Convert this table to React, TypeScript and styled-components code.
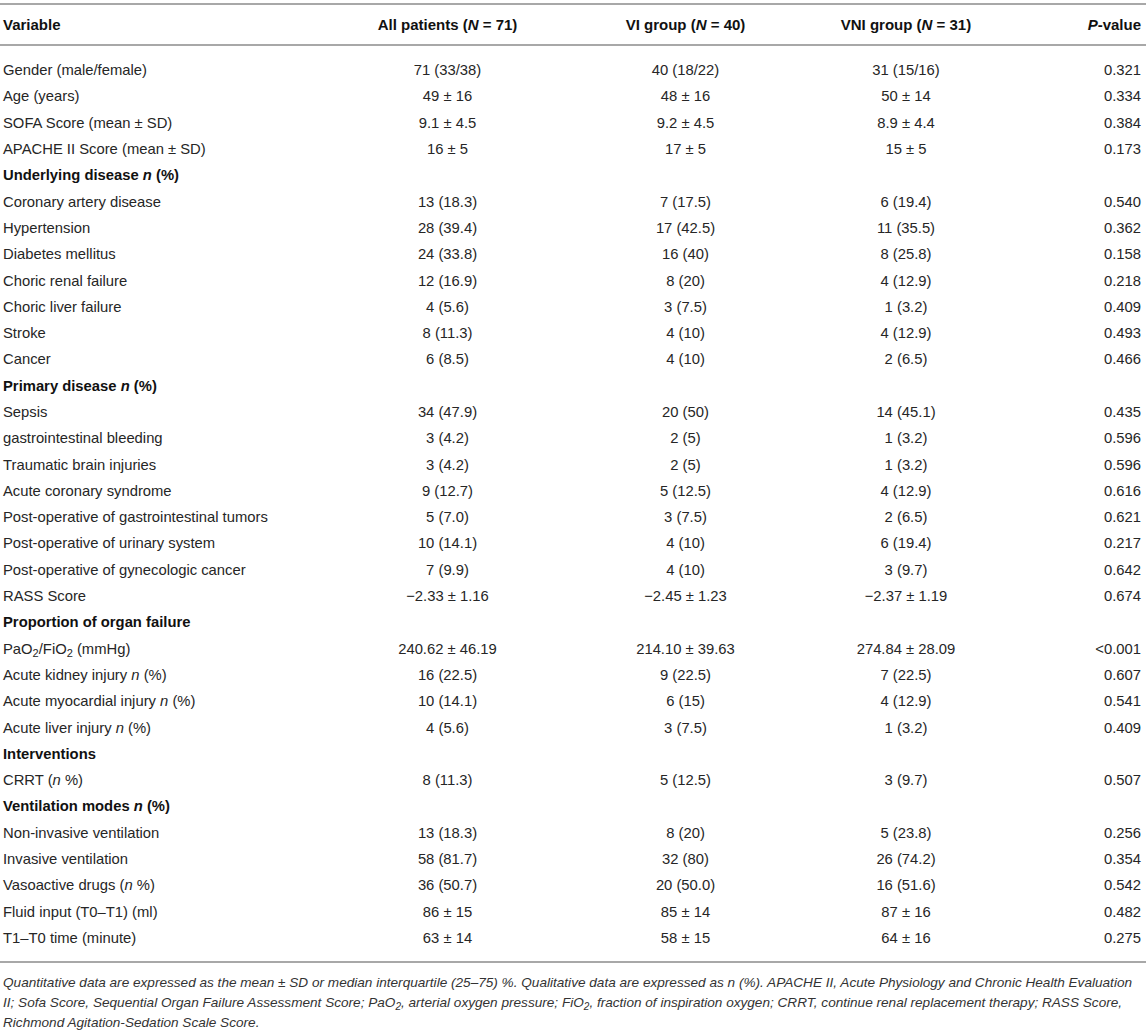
import React, { type ReactNode } from 'react';
import styled, { createGlobalStyle } from 'styled-components';

const GlobalStyle = createGlobalStyle`
  body {
    margin: 0;
    background: #fff;
    font-family: "Liberation Sans", Arial, sans-serif;
    color: #222;
  }
`;

const COLS = '330px 235px 241px 200px 1fr';

const Page = styled.div`
  width: 1146px;
  padding-top: 3px;
`;

const HeadRow = styled.div`
  display: grid;
  grid-template-columns: ${COLS};
  height: 39px;
  align-items: center;
  border-top: 2px solid #a8a8a8;
  border-bottom: 2px solid #a8a8a8;
  font-size: 15px;
  font-weight: bold;
  color: #111;
`;

const Body = styled.div`
  padding: 11px 0 10px;
  border-bottom: 2px solid #a8a8a8;
`;

const Row = styled.div`
  display: grid;
  grid-template-columns: ${COLS};
  height: 26.3px;
  align-items: center;
  font-size: 14.8px;
`;

const Cell = styled.div<{ $align?: 'left' | 'center' | 'right'; $bold?: boolean }>`
  text-align: ${(p) => p.$align || 'center'};
  padding: ${(p) => (p.$align === 'left' ? '0 0 0 3px' : p.$align === 'right' ? '0 5px 0 0' : '0')};
  font-weight: ${(p) => (p.$bold ? 'bold' : 'normal')};
  color: ${(p) => (p.$bold ? '#111' : '#262626')};
  white-space: nowrap;

  sub {
    font-size: 11px;
    vertical-align: -3px;
    line-height: 0;
  }
`;

const Note = styled.p`
  margin: 0;
  padding: 10px 0 0 3px;
  font-size: 13.6px;
  font-style: italic;
  line-height: 20px;
  color: #333;
  white-space: nowrap;

  sub {
    font-size: 10px;
    vertical-align: -3px;
    line-height: 0;
  }
`;

type DataRow = { label: ReactNode; values?: ReactNode[]; section?: boolean };

const pm = ' ± ';

const rows: DataRow[] = [
  { label: 'Gender (male/female)', values: ['71 (33/38)', '40 (18/22)', '31 (15/16)', '0.321'] },
  { label: 'Age (years)', values: [`49${pm}16`, `48${pm}16`, `50${pm}14`, '0.334'] },
  { label: `SOFA Score (mean${pm}SD)`, values: [`9.1${pm}4.5`, `9.2${pm}4.5`, `8.9${pm}4.4`, '0.384'] },
  { label: `APACHE II Score (mean${pm}SD)`, values: [`16${pm}5`, `17${pm}5`, `15${pm}5`, '0.173'] },
  { label: <>Underlying disease <i>n</i> (%)</>, section: true },
  { label: 'Coronary artery disease', values: ['13 (18.3)', '7 (17.5)', '6 (19.4)', '0.540'] },
  { label: 'Hypertension', values: ['28 (39.4)', '17 (42.5)', '11 (35.5)', '0.362'] },
  { label: 'Diabetes mellitus', values: ['24 (33.8)', '16 (40)', '8 (25.8)', '0.158'] },
  { label: 'Choric renal failure', values: ['12 (16.9)', '8 (20)', '4 (12.9)', '0.218'] },
  { label: 'Choric liver failure', values: ['4 (5.6)', '3 (7.5)', '1 (3.2)', '0.409'] },
  { label: 'Stroke', values: ['8 (11.3)', '4 (10)', '4 (12.9)', '0.493'] },
  { label: 'Cancer', values: ['6 (8.5)', '4 (10)', '2 (6.5)', '0.466'] },
  { label: <>Primary disease <i>n</i> (%)</>, section: true },
  { label: 'Sepsis', values: ['34 (47.9)', '20 (50)', '14 (45.1)', '0.435'] },
  { label: 'gastrointestinal bleeding', values: ['3 (4.2)', '2 (5)', '1 (3.2)', '0.596'] },
  { label: 'Traumatic brain injuries', values: ['3 (4.2)', '2 (5)', '1 (3.2)', '0.596'] },
  { label: 'Acute coronary syndrome', values: ['9 (12.7)', '5 (12.5)', '4 (12.9)', '0.616'] },
  { label: 'Post-operative of gastrointestinal tumors', values: ['5 (7.0)', '3 (7.5)', '2 (6.5)', '0.621'] },
  { label: 'Post-operative of urinary system', values: ['10 (14.1)', '4 (10)', '6 (19.4)', '0.217'] },
  { label: 'Post-operative of gynecologic cancer', values: ['7 (9.9)', '4 (10)', '3 (9.7)', '0.642'] },
  { label: 'RASS Score', values: [`−2.33${pm}1.16`, `−2.45${pm}1.23`, `−2.37${pm}1.19`, '0.674'] },
  { label: 'Proportion of organ failure', section: true },
  {
    label: <>PaO<sub>2</sub>/FiO<sub>2</sub> (mmHg)</>,
    values: [`240.62${pm}46.19`, `214.10${pm}39.63`, `274.84${pm}28.09`, '<0.001'],
  },
  { label: <>Acute kidney injury <i>n</i> (%)</>, values: ['16 (22.5)', '9 (22.5)', '7 (22.5)', '0.607'] },
  { label: <>Acute myocardial injury <i>n</i> (%)</>, values: ['10 (14.1)', '6 (15)', '4 (12.9)', '0.541'] },
  { label: <>Acute liver injury <i>n</i> (%)</>, values: ['4 (5.6)', '3 (7.5)', '1 (3.2)', '0.409'] },
  { label: 'Interventions', section: true },
  { label: <>CRRT (<i>n</i> %)</>, values: ['8 (11.3)', '5 (12.5)', '3 (9.7)', '0.507'] },
  { label: <>Ventilation modes <i>n</i> (%)</>, section: true },
  { label: 'Non-invasive ventilation', values: ['13 (18.3)', '8 (20)', '5 (23.8)', '0.256'] },
  { label: 'Invasive ventilation', values: ['58 (81.7)', '32 (80)', '26 (74.2)', '0.354'] },
  { label: <>Vasoactive drugs (<i>n</i> %)</>, values: ['36 (50.7)', '20 (50.0)', '16 (51.6)', '0.542'] },
  { label: 'Fluid input (T0–T1) (ml)', values: [`86${pm}15`, `85${pm}14`, `87${pm}16`, '0.482'] },
  { label: 'T1–T0 time (minute)', values: [`63${pm}14`, `58${pm}15`, `64${pm}16`, '0.275'] },
];

export default function App() {
  return (
    <Page>
      <GlobalStyle />
      <HeadRow>
        <Cell $align="left" $bold>Variable</Cell>
        <Cell $bold>All patients (<i>N</i> = 71)</Cell>
        <Cell $bold>VI group (<i>N</i> = 40)</Cell>
        <Cell $bold>VNI group (<i>N</i> = 31)</Cell>
        <Cell $align="right" $bold><i>P</i>-value</Cell>
      </HeadRow>
      <Body>
        {rows.map((r, i) => (
          <Row key={i}>
            <Cell $align="left" $bold={r.section}>{r.label}</Cell>
            {r.values &&
              r.values.map((v, j) => (
                <Cell key={j} $align={j === 3 ? 'right' : 'center'}>{v}</Cell>
              ))}
          </Row>
        ))}
      </Body>
      <Note>
        Quantitative data are expressed as the mean ± SD or median interquartile (25–75) %. Qualitative data are
        expressed as n (%). APACHE II, Acute Physiology and Chronic Health Evaluation
        <br />
        II; Sofa Score, Sequential Organ Failure Assessment Score; PaO<sub>2</sub>, arterial oxygen pressure; FiO
        <sub>2</sub>, fraction of inspiration oxygen; CRRT, continue renal replacement therapy; RASS Score,
        <br />
        Richmond Agitation-Sedation Scale Score.
      </Note>
    </Page>
  );
}
